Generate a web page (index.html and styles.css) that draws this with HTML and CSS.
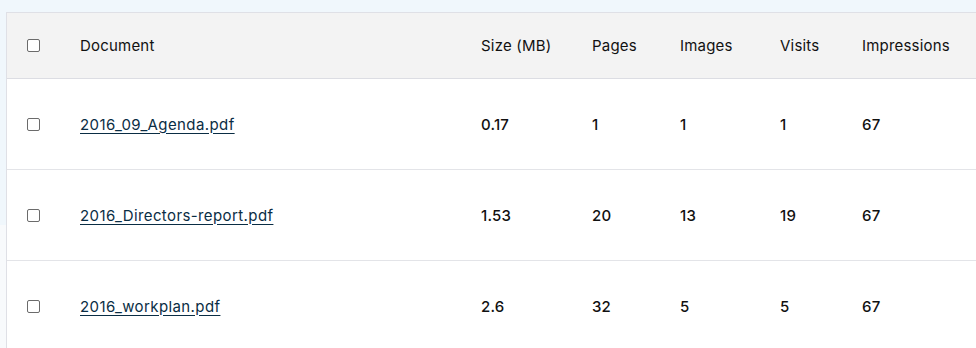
FILE: index.html
```html
<!DOCTYPE html>
<html>
<head>
<meta charset="utf-8">
<link rel="stylesheet" href="styles.css">
</head>
<body>
<div class="page">
  <div class="panel">
    <table class="docs">
      <colgroup>
        <col class="c-check"><col class="c-doc"><col class="c-size"><col class="c-pages"><col class="c-images"><col class="c-visits"><col class="c-impr">
      </colgroup>
      <thead>
        <tr>
          <th><span class="box"></span></th>
          <th>Document</th>
          <th>Size (MB)</th>
          <th>Pages</th>
          <th>Images</th>
          <th>Visits</th>
          <th>Impressions</th>
        </tr>
      </thead>
      <tbody>
        <tr>
          <td><span class="box"></span></td>
          <td><a href="#">2016_09_Agenda.pdf</a></td>
          <td>0.17</td><td>1</td><td>1</td><td>1</td><td>67</td>
        </tr>
        <tr>
          <td><span class="box"></span></td>
          <td><a href="#">2016_Directors-report.pdf</a></td>
          <td>1.53</td><td>20</td><td>13</td><td>19</td><td>67</td>
        </tr>
        <tr>
          <td><span class="box"></span></td>
          <td><a href="#">2016_workplan.pdf</a></td>
          <td>2.6</td><td>32</td><td>5</td><td>5</td><td>67</td>
        </tr>
      </tbody>
    </table>
  </div>
</div>
</body>
</html>
```
FILE: styles.css
```css
html, body {
  margin: 0;
  padding: 0;
  overflow: hidden;
}
body {
  width: 976px;
  height: 348px;
  background: linear-gradient(to bottom, #f0f7fc 0, #f0f7fc 225px, #f8fafc 225px);
  font-family: Inter, "Noto Sans", sans-serif;
  color: #141414;
}
.page {
  padding: 12px 0 0 6px;
}
.panel {
  width: 1010px;
  background: #ffffff;
  border-left: 1px solid #dfe0e6;
  border-top: 1px solid #dfe0e6;
}
.docs {
  border-collapse: collapse;
  table-layout: fixed;
  width: 1010px;
}
.c-check { width: 53px; }
.c-doc { width: 401px; }
.c-size { width: 111px; }
.c-pages { width: 88px; }
.c-images { width: 100px; }
.c-visits { width: 82px; }
.c-impr { width: 175px; }
.docs th, .docs td {
  text-align: left;
  padding: 0 0 0 20px;
  font-size: 15px;
  letter-spacing: 0.2px;
  white-space: nowrap;
}
.docs thead th {
  height: 65px;
  background: #f3f3f3;
  font-weight: 400;
  color: #111;
  border-bottom: 1px solid #dcdde3;
}
.docs tbody td {
  height: 90px;
  font-weight: 500;
  color: #111;
  border-bottom: 1px solid #e3e4e8;
}
.docs a {
  color: #0a2d44;
  font-weight: 400;
  letter-spacing: 0.4px;
  text-decoration: underline;
  text-underline-offset: 3px;
}
.box {
  display: inline-block;
  width: 11px;
  height: 11px;
  border: 1px solid #6b6b6b;
  border-radius: 2px;
  background: #fff;
  vertical-align: middle;
  position: relative;
  top: -1px;
}
```
